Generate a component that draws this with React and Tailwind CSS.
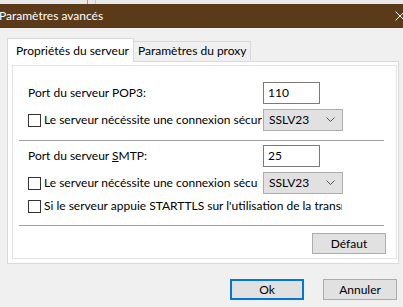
import React from 'react';

const font = { fontFamily: 'Lato, "Noto Sans", sans-serif' };

const Checkbox = () => (
  <span className="inline-block w-[13px] h-[13px] border border-[#333333] bg-white shrink-0" />
);

const Select = ({ value }) => (
  <div className="w-[80px] h-[22px] bg-[#e1e1e1] border border-[#adadad] flex items-center justify-between pl-[5px] pr-[6px] shrink-0">
    <span className="text-black">{value}</span>
    <svg width="9" height="6" viewBox="0 0 9 6" className="mr-[1px]">
      <path d="M0.5 0.5 L4.5 4.5 L8.5 0.5" fill="none" stroke="#555555" strokeWidth="1" />
    </svg>
  </div>
);

const Input = ({ value }) => (
  <div className="w-[57px] h-[22px] bg-white border border-[#7a7a7a] flex items-center px-[4px] text-black">
    {value}
  </div>
);

const Button = ({ children, primary }) => (
  <div
    className={`w-[74px] h-[21px] flex items-center justify-center text-black ${
      primary ? 'bg-[#e1e1e1] border-2 border-[#0078d7]' : 'bg-[#e1e1e1] border border-[#adadad]'
    }`}
  >
    {children}
  </div>
);

export default function App() {
  return (
    <div className="w-[403px] h-[307px] bg-[#f0f0f0] overflow-hidden relative text-[12px]" style={font}>
      {/* strip above the window */}
      <div className="h-[4px] bg-[#e9e9e9] flex">
        <div className="ml-[87px] w-[1px] bg-[#9a9a9a]" />
        <div className="ml-[7px] w-[1px] bg-[#c8c8c8]" />
      </div>

      {/* title bar */}
      <div className="h-[24px] bg-[#5b3a1a] flex items-center justify-between">
        <span className="text-white -ml-[1px]">Paramètres avancés</span>
        <svg width="10" height="10" viewBox="0 0 10 10" className="mr-[-2px]">
          <path d="M0.5 0.5 L9.5 9.5 M9.5 0.5 L0.5 9.5" stroke="#ffffff" strokeWidth="1" />
        </svg>
      </div>

      {/* tabs */}
      <div className="pl-[7px] pt-[10px] flex items-end">
        <div className="w-[127px] h-[24px] pl-[8px] bg-white border border-b-0 border-[#d9d9d9] flex items-center text-black relative z-10 -mb-[1px] whitespace-nowrap">
          Propriétés du serveur
        </div>
        <div className="w-[117px] h-[19px] pl-[4px] bg-[#f0f0f0] border border-l-0 border-b-0 border-[#d9d9d9] flex items-center text-black mb-[1px] whitespace-nowrap">
          Paramètres du proxy
        </div>
      </div>

      {/* tab page */}
      <div className="ml-[7px] w-[392px] h-[203px] bg-white border border-[#d9d9d9] pl-[4px] pt-[3px] pr-[1px] pb-[4px]">
        <div className="h-full border border-[#e3e3e3] pl-[15px] pr-[11px] pt-[15px]">
          <div className="flex items-center justify-between h-[23px]">
            <span className="text-black">Port du serveur POP3:</span>
            <div className="mr-[65px]">
              <Input value="110" />
            </div>
          </div>
          <div className="flex items-center h-[22px] mt-[5px]">
            <Checkbox />
            <span className="text-black ml-[3px] w-[219px] whitespace-nowrap overflow-hidden">
              Le serveur nécéssite une connexion sécur
            </span>
            <Select value="SSLV23" />
          </div>
          <div className="h-[1px] bg-[#a0a0a0] ml-[-9px] mr-[1px] mt-[9px]" />

          <div className="flex items-center justify-between h-[23px] mt-[3px]">
            <span className="text-black">
              Port du serveur <span className="underline">S</span>MTP:
            </span>
            <div className="mr-[65px]">
              <Input value="25" />
            </div>
          </div>
          <div className="flex items-center h-[22px] mt-[5px]">
            <Checkbox />
            <span className="text-black ml-[3px] w-[219px] whitespace-nowrap overflow-hidden">
              Le serveur nécéssite une connexion sécu
            </span>
            <Select value="SSLV23" />
          </div>
          <div className="flex items-center h-[20px] mt-[2px]">
            <Checkbox />
            <span className="text-black ml-[3px] w-[298px] whitespace-nowrap overflow-hidden">
              Si le serveur appuie STARTTLS sur l'utilisation de la transm
            </span>
          </div>
          <div className="h-[1px] bg-[#a0a0a0] ml-[-9px] mr-[1px] mt-[9px]" />
          <div className="flex justify-end mt-[7px] mr-[-1px]">
            <Button>Défaut</Button>
          </div>
        </div>
      </div>

      {/* dialog buttons */}
      <div className="flex justify-end gap-[19px] pr-[6px] mt-[15px]">
        <Button primary>Ok</Button>
        <Button>Annuler</Button>
      </div>
    </div>
  );
}
